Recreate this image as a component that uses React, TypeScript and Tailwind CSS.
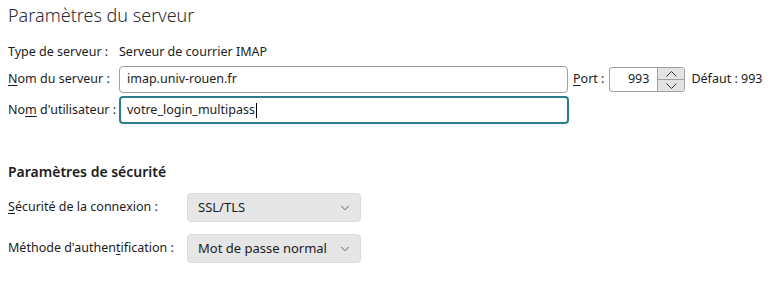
import { ChevronDown } from 'lucide-react'

const font = { fontFamily: '"Noto Sans", "Open Sans", sans-serif' }

function Select({ value }: { value: string }) {
  return (
    <div className="w-[174px] h-[29px] flex items-center justify-between pl-[10px] pr-[8px] rounded-[4px] bg-[#e6e6e6] border border-[#dcdcdc] text-[13px] text-[#1c1b22]">
      <span>{value}</span>
      <ChevronDown size={14} strokeWidth={1.3} className="text-[#3a3a3a]" />
    </div>
  )
}

function Chevron({ up }: { up?: boolean }) {
  return (
    <svg width="11" height="6" viewBox="0 0 11 6" fill="none" stroke="#333" strokeWidth="1">
      <polyline points={up ? '0.5,5.5 5.5,0.5 10.5,5.5' : '0.5,0.5 5.5,5.5 10.5,0.5'} />
    </svg>
  )
}

export default function App() {
  return (
    <div className="w-[777px] h-[281px] bg-white text-[#1c1b22] px-2 pt-[2px]" style={font}>
      <h1 className="text-[18px] font-light leading-[26px] text-[#2b2a33]">Paramètres du serveur</h1>

      {/* Server rows */}
      <div className="mt-[14px] flex flex-col text-[12.5px]">
        <div className="flex items-center h-[20px]">
          <span className="w-[111px]">Type de serveur :</span>
          <span>Serveur de courrier IMAP</span>
        </div>

        <div className="flex items-center mt-[4px] h-[27px]">
          <span className="w-[111px]">
            <span className="underline underline-offset-2">N</span>om du serveur :
          </span>
          <div className="w-[449px] h-[27px] flex items-center px-[7px] rounded-[4px] border border-[#a0a0a0]">
            imap.univ-rouen.fr
          </div>
          <span className="ml-[5px]">
            <span className="underline underline-offset-2">P</span>ort :
          </span>
          <div className="ml-[5px] w-[76px] h-[25px] flex rounded-[3px] border border-[#a0a0a0] overflow-hidden">
            <div className="flex-1 flex items-center justify-end pr-[8px]">993</div>
            <div className="w-[27px] flex flex-col border-l border-[#a0a0a0]">
              <div className="flex-1 flex items-center justify-center bg-[#e3e3e3] border-b border-[#a0a0a0]">
                <Chevron up />
              </div>
              <div className="flex-1 flex items-center justify-center bg-[#e3e3e3]">
                <Chevron />
              </div>
            </div>
          </div>
          <span className="ml-[6px]">Défaut : 993</span>
        </div>

        <div className="flex items-center mt-[3px] h-[28px]">
          <span className="w-[111px]">
            No<span className="underline underline-offset-2">m</span> d'utilisateur :
          </span>
          <div className="w-[450px] h-[28px] flex items-center px-[6px] rounded-[4px] border-2 border-[#2a7f8a]">
            votre_login_multipass<span className="inline-block w-px h-[15px] bg-black ml-px" />
          </div>
        </div>
      </div>

      <h2 className="mt-[38px] text-[14px] font-semibold text-[#1c1b22] leading-[20px]">Paramètres de sécurité</h2>

      <div className="mt-[11px] flex flex-col gap-[12px] text-[12.5px]">
        <div className="flex items-center">
          <span className="w-[179px]">
            <span className="underline underline-offset-2">S</span>écurité de la connexion :
          </span>
          <Select value="SSL/TLS" />
        </div>
        <div className="flex items-center">
          <span className="w-[179px]">
            Méthode d'authen<span className="underline underline-offset-2">t</span>ification :
          </span>
          <Select value="Mot de passe normal" />
        </div>
      </div>
    </div>
  )
}
